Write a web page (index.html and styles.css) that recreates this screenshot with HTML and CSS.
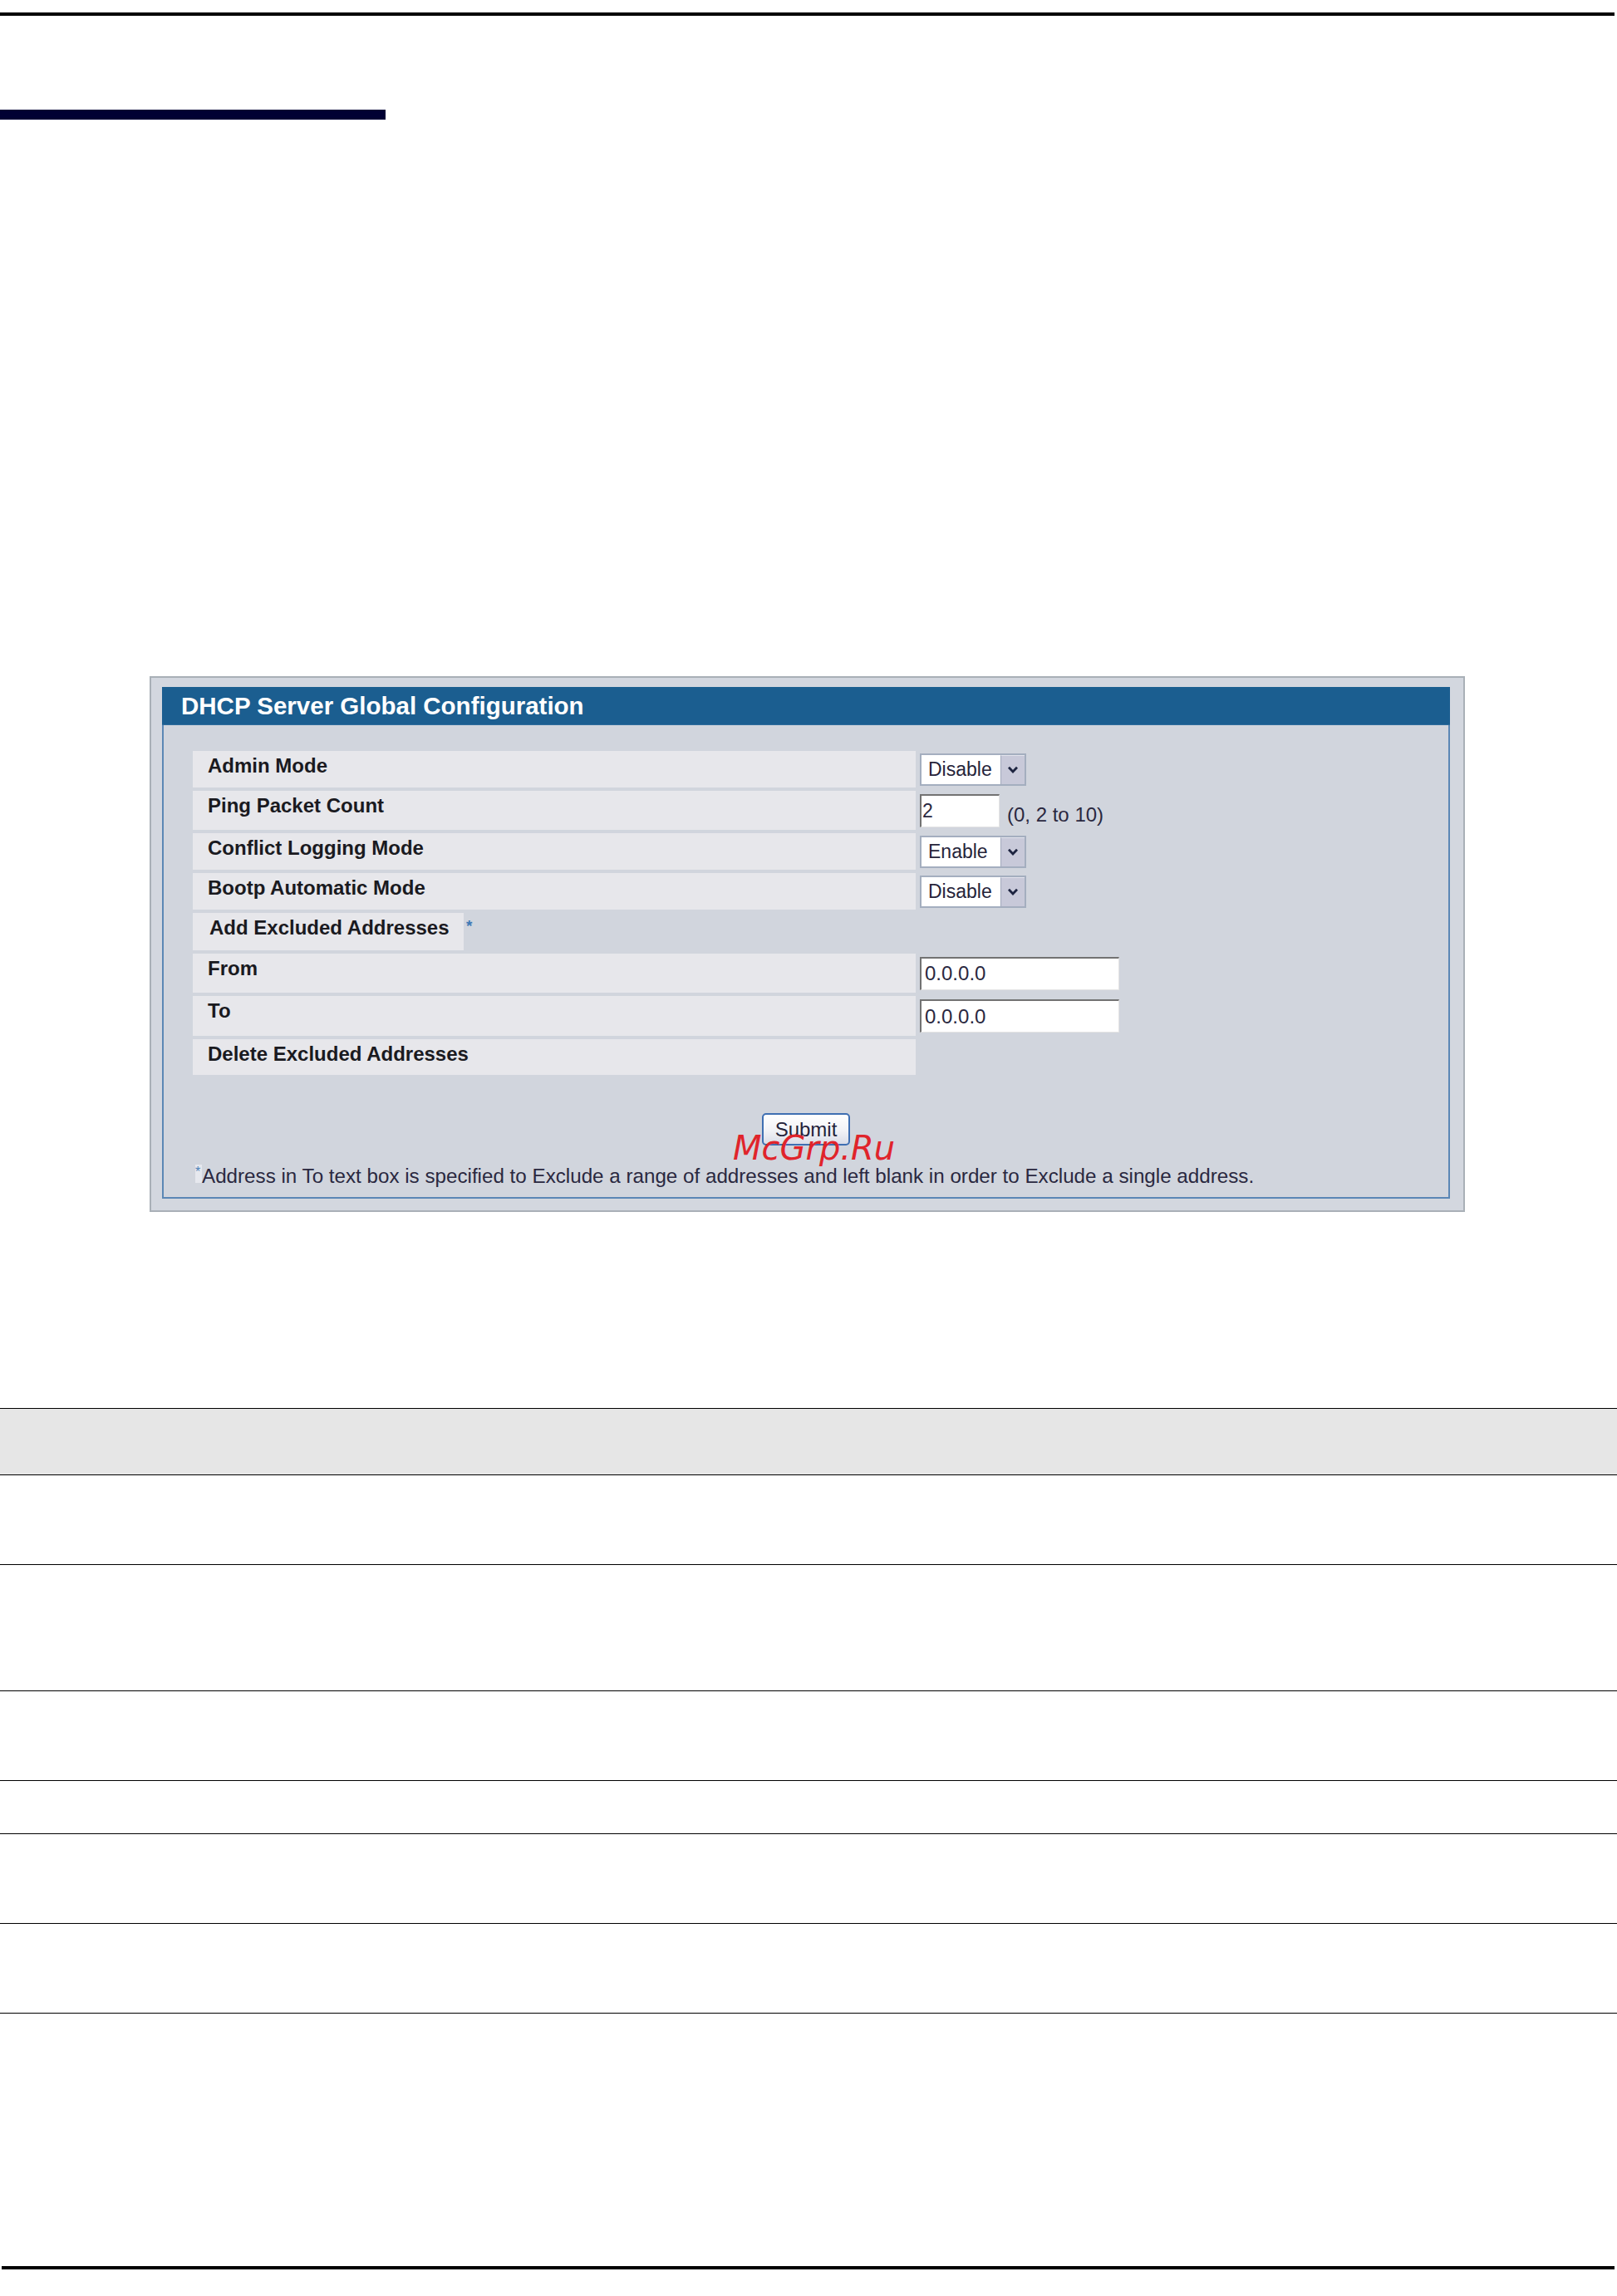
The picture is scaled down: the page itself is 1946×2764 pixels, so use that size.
FILE: index.html
```html
<!DOCTYPE html>
<html lang="en">
<head>
<meta charset="utf-8">
<title>DHCP Server Global Configuration</title>
<link rel="stylesheet" href="styles.css">
</head>
<body>
<div class="page">
  <div class="rule-top"></div>
  <div class="section-bar"></div>

  <div class="figure">
    <div class="panel">
      <div class="panel-header">DHCP Server Global Configuration</div>
      <div class="panel-body">
        <div class="rows">
          <div class="row">
            <div class="label">Admin Mode</div>
            <div class="value">
              <div class="select"><span class="select-value">Disable</span><span class="select-arrow"><svg width="14" height="9" viewBox="0 0 14 9"><path d="M2 1.8 L7 7 L12 1.8" fill="none" stroke="#1d2440" stroke-width="2.8"/></svg></span></div>
            </div>
          </div>
          <div class="row row--tall">
            <div class="label">Ping Packet Count</div>
            <div class="value">
              <input class="text-input text-input--short" type="text" value="2">
              <span class="hint">(0, 2 to 10)</span>
            </div>
          </div>
          <div class="row">
            <div class="label">Conflict Logging Mode</div>
            <div class="value">
              <div class="select"><span class="select-value">Enable</span><span class="select-arrow"><svg width="14" height="9" viewBox="0 0 14 9"><path d="M2 1.8 L7 7 L12 1.8" fill="none" stroke="#1d2440" stroke-width="2.8"/></svg></span></div>
            </div>
          </div>
          <div class="row">
            <div class="label">Bootp Automatic Mode</div>
            <div class="value">
              <div class="select"><span class="select-value">Disable</span><span class="select-arrow"><svg width="14" height="9" viewBox="0 0 14 9"><path d="M2 1.8 L7 7 L12 1.8" fill="none" stroke="#1d2440" stroke-width="2.8"/></svg></span></div>
            </div>
          </div>
          <div class="row row--add">
            <div class="label label--short">Add Excluded Addresses</div>
            <span class="req">*</span>
          </div>
          <div class="row row--tall">
            <div class="label">From</div>
            <div class="value">
              <input class="text-input text-input--long" type="text" value="0.0.0.0">
            </div>
          </div>
          <div class="row row--xtall">
            <div class="label">To</div>
            <div class="value">
              <input class="text-input text-input--long" type="text" value="0.0.0.0">
            </div>
          </div>
          <div class="row row--last">
            <div class="label">Delete Excluded Addresses</div>
          </div>
        </div>
        <div class="actions">
          <button class="btn" type="button">Submit</button>
        </div>
        <p class="footnote"><span class="foot-ast">*</span>Address in To text box is specified to Exclude a range of addresses and left blank in order to Exclude a single address.</p>
      </div>
    </div>
    <div class="watermark">McGrp.Ru</div>
  </div>

  <div class="spec-table">
    <div class="spec-row spec-row--head"></div>
    <div class="spec-row spec-row--md"></div>
    <div class="spec-row spec-row--lg"></div>
    <div class="spec-row spec-row--md"></div>
    <div class="spec-row spec-row--sm"></div>
    <div class="spec-row spec-row--md"></div>
    <div class="spec-row spec-row--md"></div>
  </div>

  <div class="rule-bottom"></div>
</div>
</body>
</html>
```

FILE: styles.css
```css
html, body {
  margin: 0;
  padding: 0;
  background: #ffffff;
}

body {
  font-family: "Liberation Sans", Arial, sans-serif;
  color: #1d1d22;
}

.page {
  padding-top: 15px;
  padding-bottom: 31px;
}

.rule-top {
  height: 4px;
  background: #000000;
  margin-right: 3px;
}

.section-bar {
  margin-top: 113px;
  width: 464px;
  height: 12px;
  background: #000033;
}

/* ---------- screenshot figure ---------- */
.figure {
  position: relative;
  margin-top: 670px;
  margin-left: 180px;
  width: 1583px;
  box-sizing: border-box;
  border: 2px solid #a9b0b7;
  background: #d3d7df;
  padding: 11px 16px 14px 13px;
}

.panel {
  border: 2px solid #5b87b5;
  border-top: 0;
  background: #d1d5dd;
}

.panel-header {
  margin: 0 -2px;
  height: 46px;
  line-height: 46px;
  background: #1b5e90;
  border-bottom: 1px solid #2f6d9c;
  box-sizing: border-box;
  color: #ffffff;
  font-weight: bold;
  font-size: 29.5px;
  padding-left: 23px;
  white-space: nowrap;
}

.panel-body {
  padding: 31px 0 11px;
}

.rows {
  display: flex;
  flex-direction: column;
  gap: 4px;
  padding-left: 35px;
}

.row {
  display: flex;
  height: 44px;
}

.row--tall {
  height: 47px;
}

.row--xtall {
  height: 48px;
}

.row--add {
  height: 45px;
}

.row--last {
  height: 43px;
}

.label {
  width: 870px;
  flex: none;
  box-sizing: border-box;
  background: #e7e7eb;
  padding: 4px 0 0 18px;
  font-weight: bold;
  font-size: 24px;
  line-height: 28px;
  color: #1a1a1f;
  white-space: nowrap;
}

.label--short {
  width: 326px;
  padding-left: 20px;
}

.req {
  color: #3f79b5;
  font-size: 19px;
  font-weight: bold;
  line-height: 19px;
  margin-left: 3px;
  padding-top: 6px;
}

.value {
  display: flex;
  align-items: center;
  gap: 9px;
  margin-left: 5px;
}

/* select imitation */
.select {
  display: flex;
  width: 128px;
  height: 39px;
  box-sizing: border-box;
  border: 2px solid #a4aebf;
  background: #ffffff;
}

.select-value {
  flex: 1;
  padding-left: 8px;
  font-size: 23px;
  line-height: 35px;
  color: #26243a;
}

.select-arrow {
  width: 29px;
  box-sizing: border-box;
  border-left: 1px solid #a0a8bb;
  border-top: 1px solid #e2e3ec;
  background: #c8c9d9;
  display: flex;
  align-items: center;
  justify-content: center;
}

.text-input {
  box-sizing: border-box;
  height: 40px;
  margin: 0;
  border-style: solid;
  border-width: 2px 1px 1px 2px;
  border-color: #727272 #e4e4e4 #e4e4e4 #727272;
  background: #ffffff;
  font-family: "Liberation Sans", Arial, sans-serif;
  font-size: 24px;
  color: #2a2840;
  padding: 0 2px;
  outline: none;
}

.text-input--short {
  width: 96px;
  font-size: 23px;
  padding-left: 1px;
}

.text-input--long {
  width: 240px;
  padding-left: 4px;
}

.hint {
  align-self: flex-end;
  margin-bottom: 4px;
  font-size: 24px;
  line-height: 28px;
  color: #2a2840;
}

.actions {
  display: flex;
  justify-content: center;
  margin-top: 46px;
}

.btn {
  width: 106px;
  height: 39px;
  box-sizing: border-box;
  padding: 0;
  border: 2px solid #3f6fb2;
  border-radius: 5px;
  background: linear-gradient(#ffffff 0%, #f1f2f6 55%, #dadde8 100%);
  font-family: "Liberation Sans", Arial, sans-serif;
  font-size: 24px;
  line-height: 35px;
  color: #24233a;
}

.footnote {
  margin: 23px 0 0;
  padding-left: 38px;
  font-size: 24.2px;
  line-height: 28px;
  color: #2a2840;
  white-space: nowrap;
}

.foot-ast {
  display: inline-block;
  vertical-align: top;
  width: 8px;
  height: 22px;
  line-height: 18px;
  font-size: 16px;
  color: #4d82b8;
  background: #e6e8ee;
}

.watermark {
  position: absolute;
  left: 700px;
  top: 546px;
  font-family: "DejaVu Sans", sans-serif;
  font-style: italic;
  font-size: 40px;
  line-height: 40px;
  color: #e0242b;
  white-space: nowrap;
}

/* ---------- description table ---------- */
.spec-table {
  margin-top: 236px;
  border-top: 1px solid #000000;
}

.spec-row {
  border-bottom: 1px solid #000000;
  height: 107px;
}

.spec-row--head {
  height: 79px;
  background: #e6e6e6;
}

.spec-row--lg {
  height: 151px;
}

.spec-row--sm {
  height: 63px;
}

.rule-bottom {
  margin-top: 304px;
  margin-left: 2px;
  margin-right: 3px;
  height: 4px;
  background: #000000;
}
```
